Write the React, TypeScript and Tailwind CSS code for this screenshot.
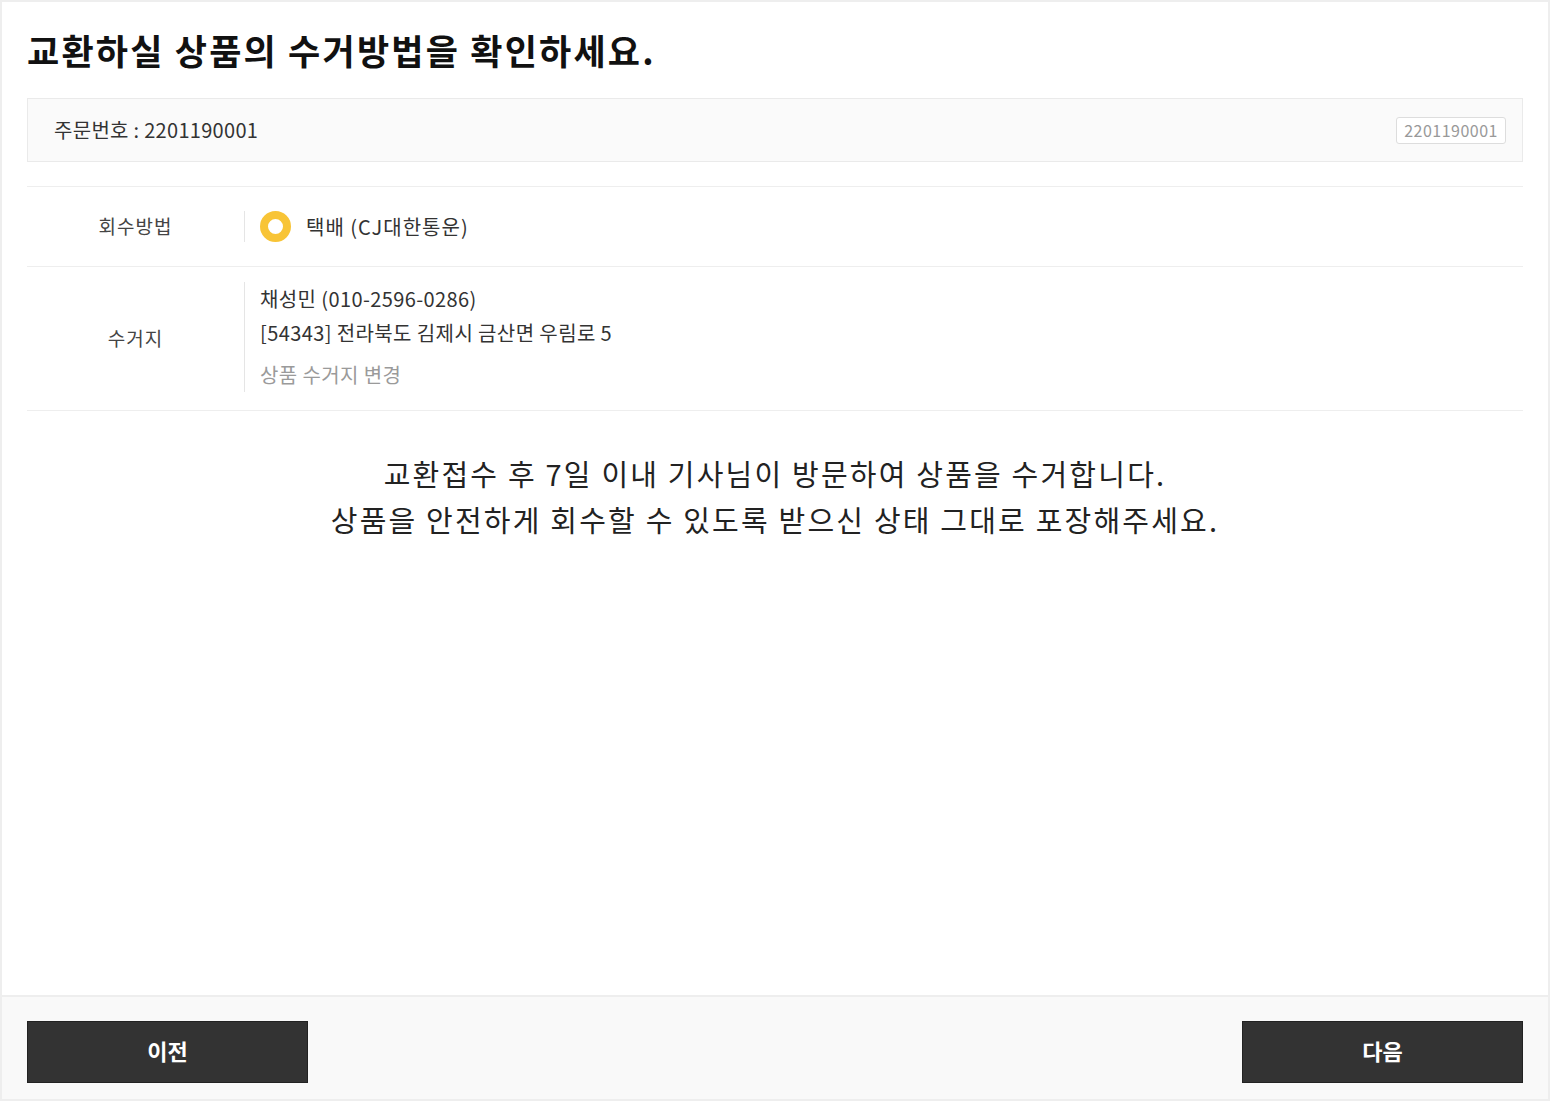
export default function App() {
    const font = { fontFamily: '"Noto Sans CJK KR", "Noto Sans", sans-serif' };

    return (
        <div className="w-[1550px] h-[1101px] bg-white border-2 border-[#eeeeee] flex flex-col text-[#333]" style={font}>
            <div className="px-[25px]">
                <h1 className="pt-[28px] text-[35px] leading-[40px] font-bold text-[#111] tracking-[2.2px]">
                    교환하실 상품의 수거방법을 확인하세요.
                </h1>

                <div className="mt-[28px] h-[64px] bg-[#fafafa] border border-[#eaeaea] flex items-center justify-between pl-[26px] pr-[16px]">
                    <span className="text-[20px] text-[#333] tracking-[0.3px]">주문번호 : 2201190001</span>
                    <span className="h-[27px] px-[7px] flex items-center border border-[#dddddd] rounded-[3px] bg-white text-[16px] text-[#999] tracking-[0.5px]">
                        2201190001
                    </span>
                </div>

                <div className="mt-[24px] border-t border-[#eeeeee]">
                    <div className="h-[80px] flex items-center border-b border-[#eeeeee]">
                        <div className="w-[217px] text-center text-[19px] text-[#444] tracking-[1px]">회수방법</div>
                        <div className="h-[31px] border-l border-[#e5e5e5] pl-[15px] flex items-center gap-[15px]">
                            <span className="w-[31px] h-[31px] rounded-full border-[8px] border-[#f8c436] bg-white"></span>
                            <span className="text-[20px] text-[#333] tracking-[1px]">택배 (CJ대한통운)</span>
                        </div>
                    </div>

                    <div className="h-[144px] flex items-center border-b border-[#eeeeee]">
                        <div className="w-[217px] text-center text-[19px] text-[#444] tracking-[1px]">수거지</div>
                        <div className="border-l border-[#e5e5e5] pl-[15px] -mt-[4px] flex flex-col text-[20px] tracking-[0.4px]">
                            <span className="leading-[34px]">채성민 (010-2596-0286)</span>
                            <span className="leading-[34px]">[54343] 전라북도 김제시 금산면 우림로 5</span>
                            <span className="leading-[34px] mt-[8px] text-[#9a9a9a]">상품 수거지 변경</span>
                        </div>
                    </div>
                </div>

                <div className="mt-[39px] text-center text-[29px] leading-[46px] text-[#222] tracking-[2.2px]">
                    <p>교환접수 후 7일 이내 기사님이 방문하여 상품을 수거합니다.</p>
                    <p>상품을 안전하게 회수할 수 있도록 받으신 상태 그대로 포장해주세요.</p>
                </div>
            </div>

            <div className="mt-auto h-[104px] bg-[#f9f9f9] border-t-2 border-[#eeeeee] px-[25px] pt-[24px] flex justify-between items-start">
                <button className="w-[281px] h-[62px] pb-[3px] bg-[#333333] border border-[#222] text-white text-[22px] font-bold">이전</button>
                <button className="w-[281px] h-[62px] pb-[3px] bg-[#333333] border border-[#222] text-white text-[22px] font-bold">다음</button>
            </div>
        </div>
    );
}
